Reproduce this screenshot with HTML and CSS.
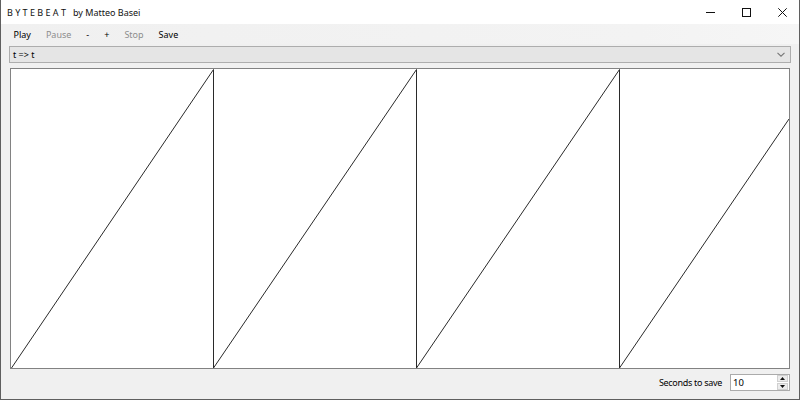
FILE: index.html
```html
<!DOCTYPE html>
<html>
<head>
<meta charset="utf-8">
<link rel="stylesheet" href="styles.css">
</head>
<body>
<div class="window">
  <div class="titlebar">
    <div class="title"><span class="brand">B Y T E B E A T</span><span class="by">by Matteo Basei</span></div>
    <div class="controls">
      <div class="ctl"><svg width="9" height="9" viewBox="0 0 9 9"><line x1="0" y1="4.5" x2="9" y2="4.5" stroke="#111" stroke-width="1"/></svg></div>
      <div class="ctl"><svg width="9" height="9" viewBox="0 0 9 9"><rect x="0.5" y="0.5" width="8" height="8" fill="none" stroke="#111" stroke-width="1"/></svg></div>
      <div class="ctl"><svg width="9" height="9" viewBox="0 0 9 9"><path d="M0.3 0.3 L8.7 8.7 M8.7 0.3 L0.3 8.7" stroke="#111" stroke-width="1"/></svg></div>
    </div>
  </div>
  <div class="menubar">
    <span class="item">Play</span>
    <span class="item off">Pause</span>
    <span class="item">-</span>
    <span class="item">+</span>
    <span class="item off">Stop</span>
    <span class="item">Save</span>
  </div>
  <div class="content">
    <div class="combo">
      <span class="combo-text">t =&gt; t</span>
      <svg class="chev" width="8" height="5" viewBox="0 0 8 5"><path d="M0.5 0.8 L4 4.2 L7.5 0.8" fill="none" stroke="#777" stroke-width="1.1"/></svg>
    </div>
    <div class="canvas">
      <svg width="778" height="299" viewBox="0 0 778 299">
        <polyline fill="none" stroke="#2a2a2a" stroke-width="1" points="0.5,299 202.5,0.5 202.5,299 405.5,0.5 405.5,299 608.5,0.5 608.5,299 778,50"/>
      </svg>
    </div>
    <div class="bottom">
      <span class="label">Seconds to save</span>
      <div class="num">
        <span class="num-val">10</span>
        <div class="spin">
          <div class="sbtn"><svg width="5" height="3" viewBox="0 0 5 3"><path d="M0 3 L2.5 0 L5 3 Z" fill="#111"/></svg></div>
          <div class="sbtn"><svg width="5" height="3" viewBox="0 0 5 3"><path d="M0 0 L2.5 3 L5 0 Z" fill="#111"/></svg></div>
        </div>
      </div>
    </div>
  </div>
</div>
</body>
</html>
```
FILE: styles.css
```css
html, body {
  margin: 0;
  padding: 0;
  background: #f0f0f0;
}
body {
  font-family: "Noto Sans", "Open Sans", sans-serif;
  font-size: 9px;
  color: #000;
}
.window {
  width: 800px;
  height: 400px;
  box-sizing: border-box;
  border: 1px solid #5f5f5f;
  border-top: none;
  background: #f0f0f0;
  display: flex;
  flex-direction: column;
  overflow: hidden;
}
.titlebar {
  height: 24px;
  background: #fff;
  display: flex;
  align-items: center;
  justify-content: space-between;
  margin: 0 -1px;
}
.title {
  padding-left: 7px;
  font-size: 9px;
  color: #111;
  display: flex;
  align-items: center;
}
.brand {
  margin-right: 7px;
}
.controls {
  display: flex;
  height: 24px;
}
.ctl {
  width: 36px;
  display: flex;
  align-items: center;
  justify-content: center;
}
.ctl svg {
  display: block;
}
.menubar {
  height: 20px;
  display: flex;
  align-items: center;
  padding-left: 5px;
  background: linear-gradient(to right, #f0f0f0 0%, #f3f3f3 80%, #f6f6f6 100%);
}
.item {
  padding: 0 7.5px;
  font-size: 9px;
  color: #000;
}
.item.off {
  color: #8d8d8d;
}
.content {
  flex: 1;
  display: flex;
  flex-direction: column;
  padding: 2px 8px 0 8px;
}
.combo {
  height: 17px;
  box-sizing: border-box;
  border: 1px solid #adadad;
  background: #e5e5e5;
  display: flex;
  align-items: center;
  justify-content: space-between;
  padding: 0 5px 0 3px;
}
.combo-text {
  font-size: 9px;
  color: #000;
}
.canvas {
  margin-top: 5px;
  margin-left: 1px;
  margin-right: 1px;
  height: 301px;
  box-sizing: border-box;
  border: 1px solid #828282;
  background: #fff;
  display: flex;
}
.canvas svg {
  display: block;
}
.bottom {
  display: flex;
  justify-content: flex-end;
  align-items: center;
  margin-top: 4px;
  height: 18px;
  padding-right: 1px;
}
.label {
  font-size: 9px;
  letter-spacing: -0.3px;
  margin-right: 8px;
}
.num {
  width: 60px;
  height: 17px;
  box-sizing: border-box;
  border: 1px solid #ababab;
  background: #fff;
  display: flex;
  justify-content: space-between;
  align-items: stretch;
}
.num-val {
  font-size: 9.5px;
  padding-left: 2px;
  line-height: 15px;
}
.spin {
  width: 11px;
  display: flex;
  flex-direction: column;
  gap: 1px;
  padding: 0 1px 0 0;
}
.sbtn {
  flex: 1;
  background: #ececec;
  border: 1px solid #d0d0d0;
  display: flex;
  align-items: center;
  justify-content: center;
}
```
